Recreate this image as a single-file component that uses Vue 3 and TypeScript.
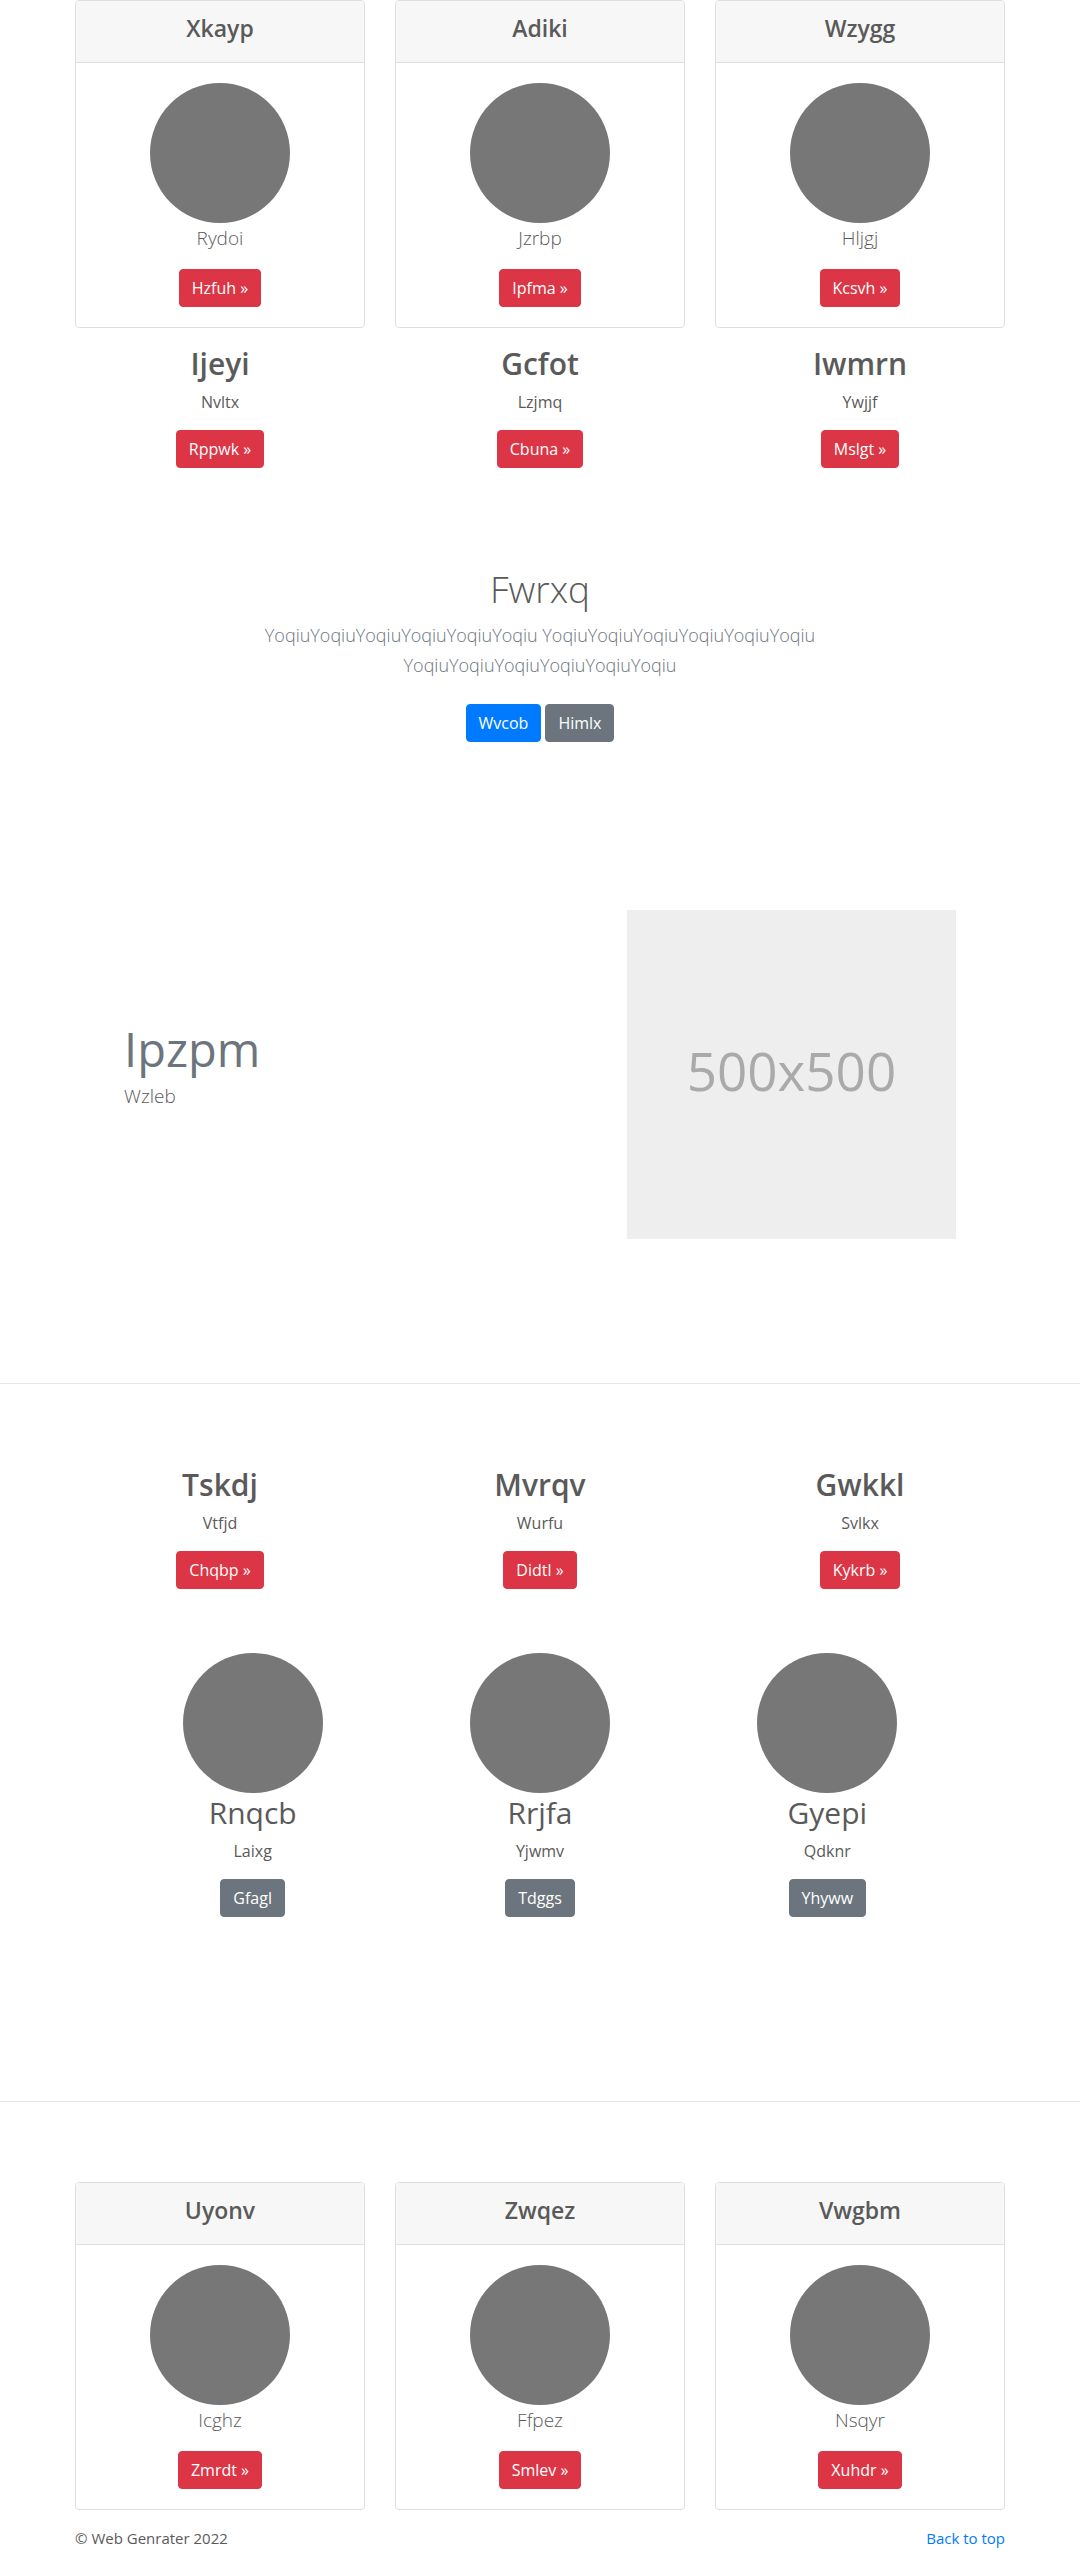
<script setup lang="ts">
interface Item {
  title: string
  text: string
  action: string
}

const topCards: Item[] = [
  { title: 'Xkayp', text: 'Rydoi', action: 'Hzfuh' },
  { title: 'Adiki', text: 'Jzrbp', action: 'Ipfma' },
  { title: 'Wzygg', text: 'Hljgj', action: 'Kcsvh' },
]
const topColumns: Item[] = [
  { title: 'Ijeyi', text: 'Nvltx', action: 'Rppwk' },
  { title: 'Gcfot', text: 'Lzjmq', action: 'Cbuna' },
  { title: 'Iwmrn', text: 'Ywjjf', action: 'Mslgt' },
]
const middleColumns: Item[] = [
  { title: 'Tskdj', text: 'Vtfjd', action: 'Chqbp' },
  { title: 'Mvrqv', text: 'Wurfu', action: 'Didtl' },
  { title: 'Gwkkl', text: 'Svlkx', action: 'Kykrb' },
]
const profiles: Item[] = [
  { title: 'Rnqcb', text: 'Laixg', action: 'Gfagl' },
  { title: 'Rrjfa', text: 'Yjwmv', action: 'Tdggs' },
  { title: 'Gyepi', text: 'Qdknr', action: 'Yhyww' },
]
const bottomCards: Item[] = [
  { title: 'Uyonv', text: 'Icghz', action: 'Zmrdt' },
  { title: 'Zwqez', text: 'Ffpez', action: 'Smlev' },
  { title: 'Vwgbm', text: 'Nsqyr', action: 'Xuhdr' },
]
const word = 'Yoqiu'.repeat(6)
const intro = [word, word, word].join(' ')
</script>

<template>
  <div id="top" class="page">
    <main>
      <div class="container grid cards">
        <article v-for="c in topCards" :key="c.title" class="card">
          <header class="card-header"><h4>{{ c.title }}</h4></header>
          <div class="card-body">
            <div class="avatar"></div>
            <p class="lead">{{ c.text }}</p>
            <a class="btn danger" href="#">{{ c.action }} »</a>
          </div>
        </article>
      </div>

      <div class="container grid">
        <section v-for="c in topColumns" :key="c.title" class="column">
          <h2>{{ c.title }}</h2>
          <p>{{ c.text }}</p>
          <a class="btn danger" href="#">{{ c.action }} »</a>
        </section>
      </div>

      <section class="hero">
        <h1>Fwrxq</h1>
        <p class="lead intro">{{ intro }}</p>
        <div class="actions">
          <a class="btn primary" href="#">Wvcob</a>
          <a class="btn secondary" href="#">Himlx</a>
        </div>
      </section>

      <section class="container feature">
        <div class="feature-text">
          <h2 class="feature-title">Ipzpm</h2>
          <p class="lead">Wzleb</p>
        </div>
        <div class="placeholder">500x500</div>
      </section>

      <hr />

      <div class="container grid">
        <section v-for="c in middleColumns" :key="c.title" class="column">
          <h2>{{ c.title }}</h2>
          <p>{{ c.text }}</p>
          <a class="btn danger" href="#">{{ c.action }} »</a>
        </section>
      </div>

      <div class="container grid profiles">
        <section v-for="c in profiles" :key="c.title" class="column">
          <div class="avatar"></div>
          <h2 class="regular">{{ c.title }}</h2>
          <p>{{ c.text }}</p>
          <a class="btn secondary" href="#">{{ c.action }}</a>
        </section>
      </div>

      <hr />

      <div class="container grid cards">
        <article v-for="c in bottomCards" :key="c.title" class="card">
          <header class="card-header"><h4>{{ c.title }}</h4></header>
          <div class="card-body">
            <div class="avatar"></div>
            <p class="lead">{{ c.text }}</p>
            <a class="btn danger" href="#">{{ c.action }} »</a>
          </div>
        </article>
      </div>
    </main>

    <footer class="container footer">
      <span>© Web Genrater 2022</span>
      <a href="#top">Back to top</a>
    </footer>
  </div>
</template>

<style>
body {
  margin: 0;
  background: #fff;
}
</style>

<style scoped>
.page,
.page * {
  box-sizing: border-box;
}
.page {
  font-family: 'Segoe UI', 'Open Sans', 'Noto Sans', sans-serif;
  font-size: 16px;
  line-height: 24px;
  color: #5a5a5a;
}
h1,
h2,
h4 {
  margin: 0 0 6px;
  font-weight: 600;
}
p {
  margin: 0 0 16px;
}
h1 {
  font-size: 37px;
  line-height: 50px;
  font-weight: 300;
}
h2 {
  font-size: 30px;
  line-height: 40px;
}
h4 {
  font-size: 23px;
  line-height: 31px;
}
.regular {
  font-weight: 400;
}
.container {
  max-width: 960px;
  margin: 0 auto;
  padding: 0 15px;
}
.grid {
  display: grid;
  grid-template-columns: repeat(3, 1fr);
  column-gap: 30px;
  text-align: center;
}
.cards {
  margin-bottom: 16px;
}
.card {
  border: 1px solid #dfdfdf;
  border-radius: 4px;
  overflow: hidden;
}
.card-header {
  padding: 12px 20px;
  background: #f7f7f7;
  border-bottom: 1px solid #dfdfdf;
}
.card-body {
  padding: 20px;
}
.column {
  padding-bottom: 16px;
}
.avatar {
  width: 140px;
  height: 140px;
  margin: 0 auto;
  border-radius: 50%;
  background: #777;
}
.lead {
  font-size: 19px;
  line-height: 30px;
  font-weight: 300;
}
.intro {
  font-size: 18px;
  color: #6c757d;
}
.btn {
  display: inline-block;
  vertical-align: top;
  padding: 6px 12px;
  border: 1px solid transparent;
  border-radius: 4px;
  color: #fff;
  text-decoration: none;
}
.danger {
  background: #dc3545;
  border-color: #dc3545;
}
.primary {
  background: #007bff;
  border-color: #007bff;
}
.secondary {
  background: #6c757d;
  border-color: #6c757d;
}
.hero {
  max-width: 664px;
  margin: 0 auto;
  padding: 80px 32px 168px;
  text-align: center;
}
.actions {
  display: flex;
  justify-content: center;
  gap: 4px;
  padding-top: 8px;
}
.feature {
  display: grid;
  grid-template-columns: 7fr 5fr;
  align-items: center;
  padding: 0 49px;
}
.feature-text {
  padding: 0 15px;
}
.feature-title {
  font-size: 47px;
  line-height: 52px;
  font-weight: 400;
  color: #6c757d;
}
.placeholder {
  display: flex;
  align-items: center;
  justify-content: center;
  aspect-ratio: 1;
  margin: 0 15px;
  padding-bottom: 8px;
  background: #eee;
  color: #aaa;
  font-size: 53px;
  line-height: 1;
}
hr {
  margin: 144px 0 81px;
  border: 0;
  border-top: 1px solid #e6e6e6;
}
.profiles {
  margin-top: 48px;
  padding: 0 49px;
  column-gap: 0;
}
.profiles + hr {
  margin: 168px 0 80px;
}
.footer {
  display: flex;
  justify-content: space-between;
  font-size: 15px;
}
.footer a {
  color: #007bff;
  text-decoration: none;
}
</style>
